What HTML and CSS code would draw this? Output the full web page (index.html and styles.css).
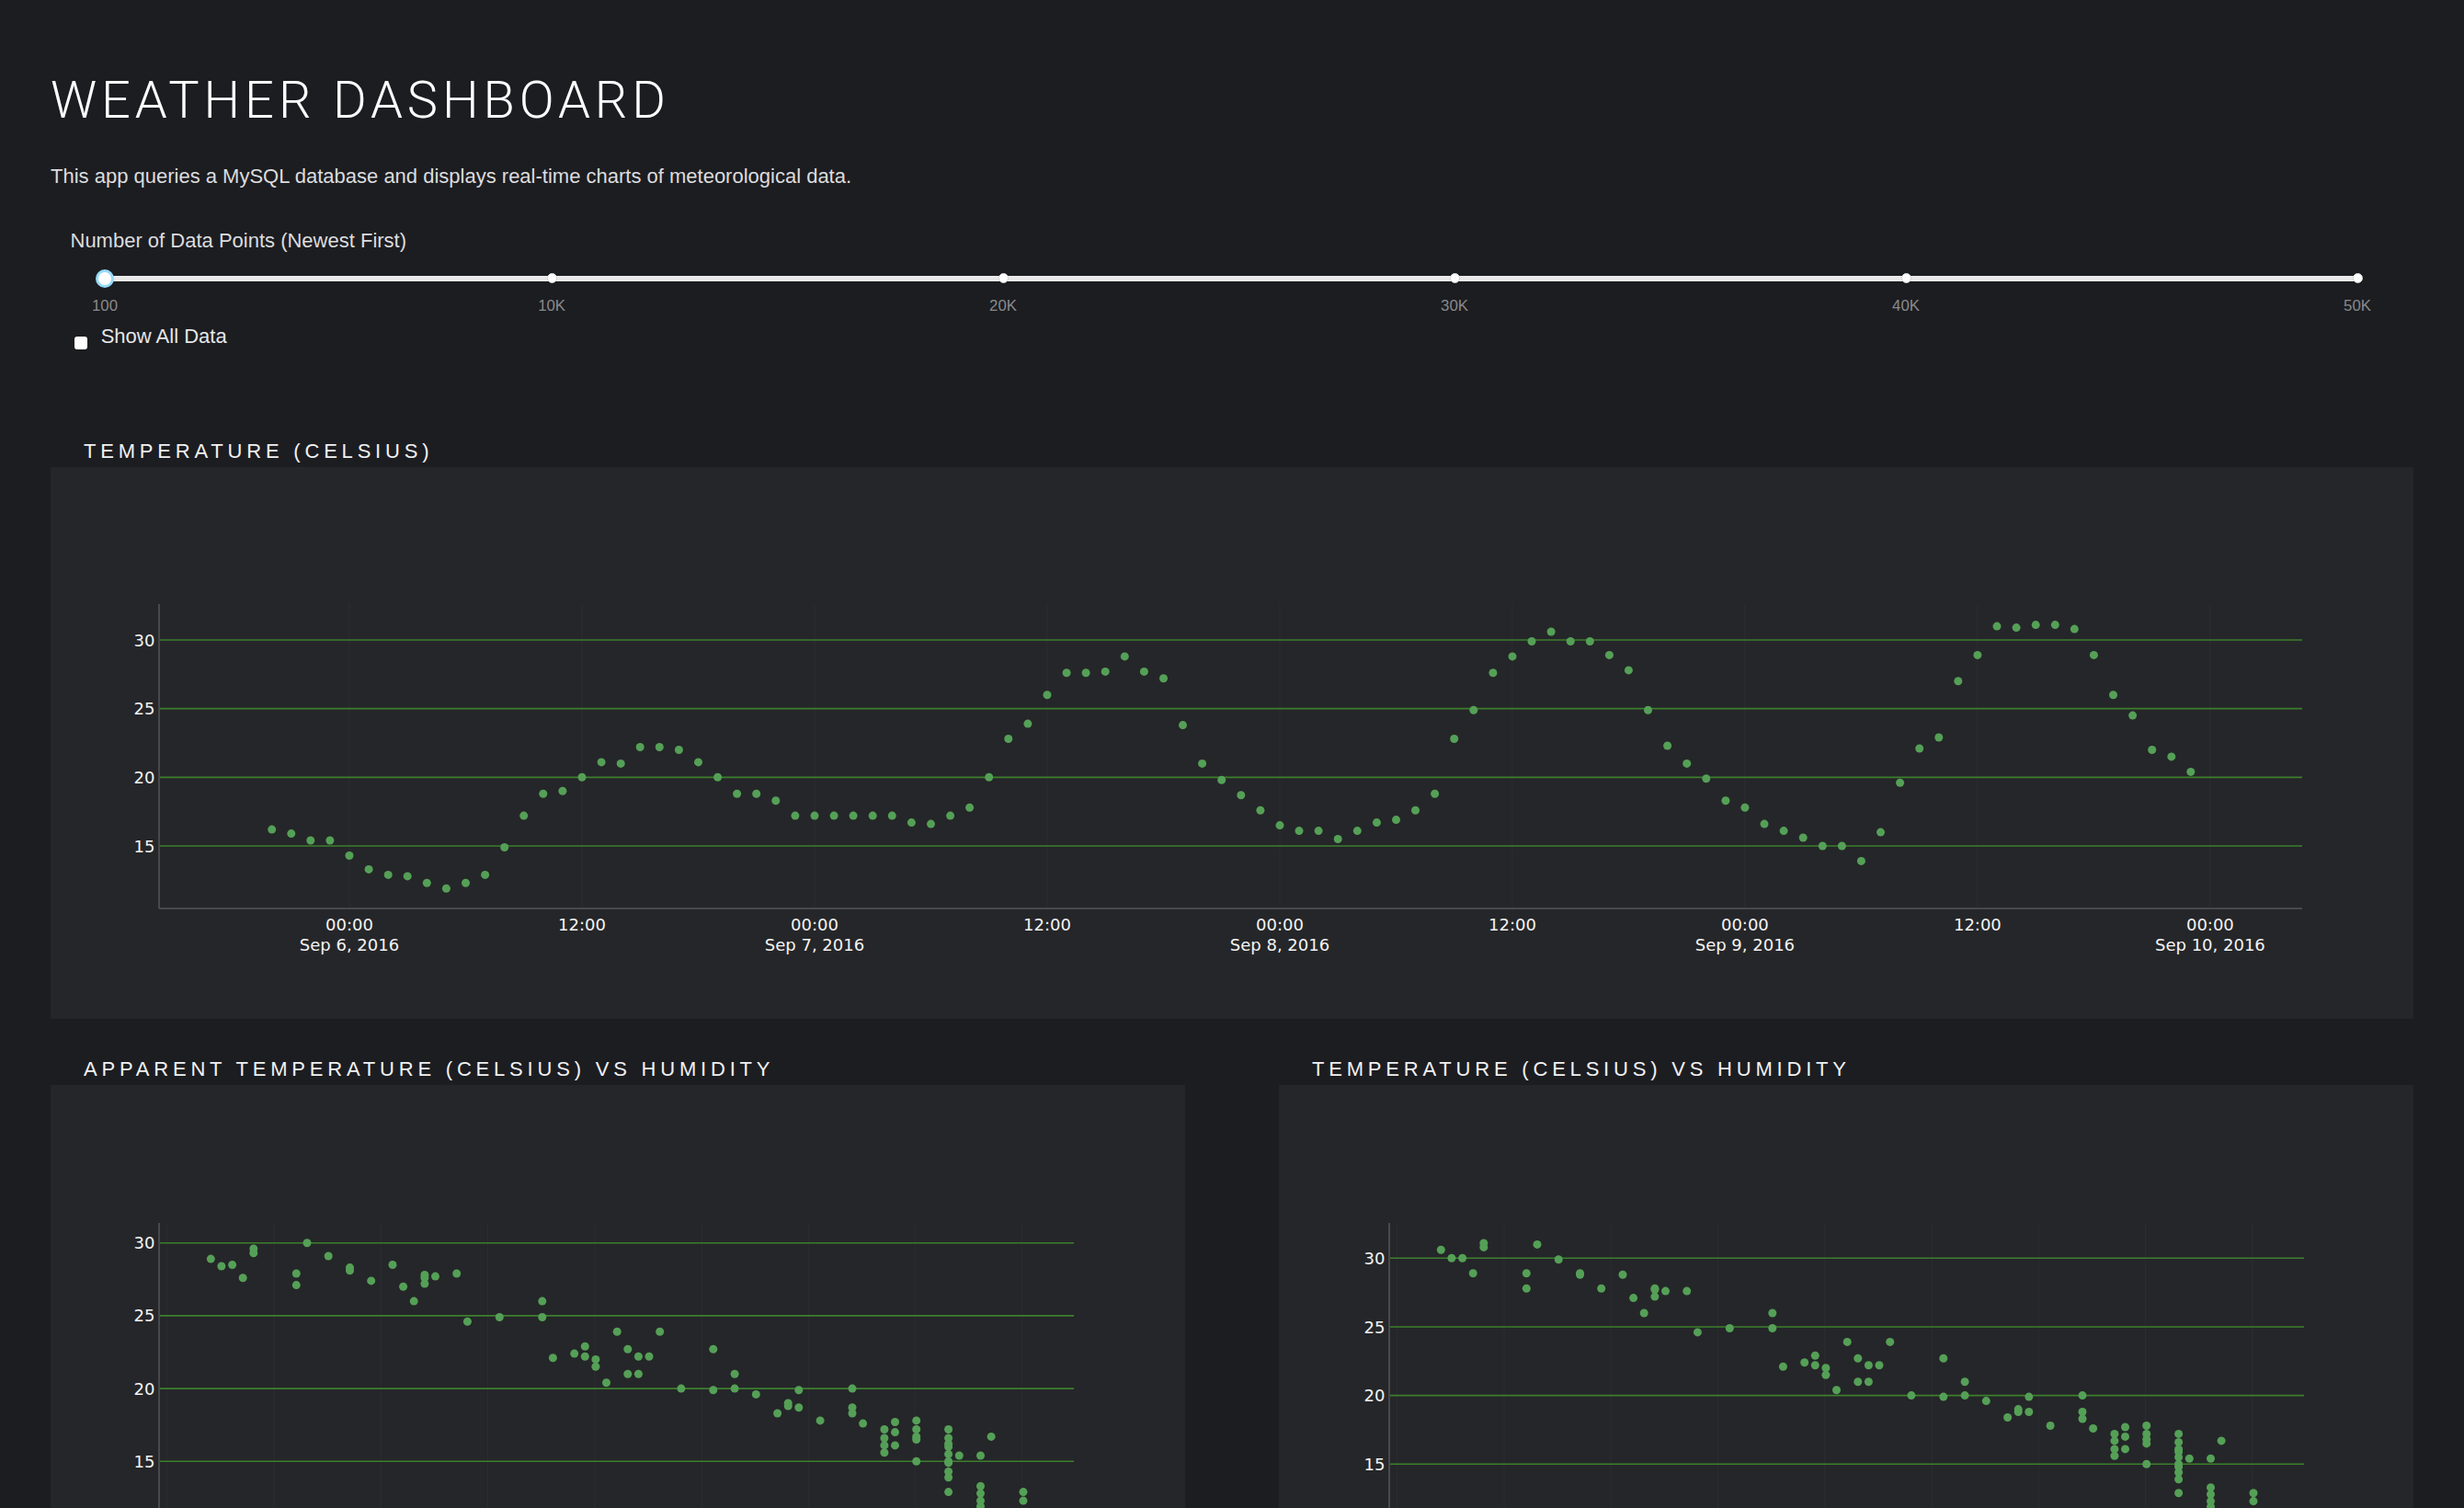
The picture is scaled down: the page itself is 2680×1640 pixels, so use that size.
FILE: index.html
```html
<!DOCTYPE html>
<html lang="en">
<head>
<meta charset="utf-8">
<title>Weather Dashboard</title>
<link rel="stylesheet" href="styles.css">
</head>
<body>
<div class="container">
  <h1 class="app-title">WEATHER DASHBOARD</h1>
  <p class="app-desc">This app queries a MySQL database and displays real-time charts of meteorological data.</p>

  <div class="controls">
    <div class="control-label">Number of Data Points (Newest First)</div>
    <div class="slider">
      <div class="slider-rail">
        <span class="slider-dot" style="left:0%"></span>
        <span class="slider-dot" style="left:19.840%"></span>
        <span class="slider-dot" style="left:39.880%"></span>
        <span class="slider-dot" style="left:59.920%"></span>
        <span class="slider-dot" style="left:79.960%"></span>
        <span class="slider-dot" style="left:100%"></span>
        <span class="slider-handle" style="left:0%"></span>
      </div>
      <div class="slider-marks">
        <span class="slider-mark" style="left:0%">100</span>
        <span class="slider-mark" style="left:19.840%">10K</span>
        <span class="slider-mark" style="left:39.880%">20K</span>
        <span class="slider-mark" style="left:59.920%">30K</span>
        <span class="slider-mark" style="left:79.960%">40K</span>
        <span class="slider-mark" style="left:100%">50K</span>
      </div>
    </div>
    <label class="checkbox"><input type="checkbox">Show All Data</label>
  </div>

  <section class="graph graph-wide">
    <h6 class="graph-title">TEMPERATURE (CELSIUS)</h6>
    <div class="graph-panel"><svg id="chart-temp" class="chart"></svg></div>
  </section>

  <div class="graph-row">
    <section class="graph">
      <h6 class="graph-title">APPARENT TEMPERATURE (CELSIUS) VS HUMIDITY</h6>
      <div class="graph-panel"><svg id="chart-apparent" class="chart"></svg></div>
    </section>
    <section class="graph">
      <h6 class="graph-title">TEMPERATURE (CELSIUS) VS HUMIDITY</h6>
      <div class="graph-panel"><svg id="chart-humidity" class="chart"></svg></div>
    </section>
  </div>
</div>
<script src="script.js"></script>
</body>
</html>
```

FILE: styles.css
```css
* { box-sizing: border-box; }

html, body {
  margin: 0;
  padding: 0;
}

body {
  background: #1c1d21;
  color: #e2e2e4;
  font-family: "Liberation Sans", Arial, Helvetica, sans-serif;
}

.container {
  padding: 81px 55px 0;
}

.app-title {
  margin: 0;
  font-family: Roboto, "Liberation Sans", sans-serif;
  font-weight: 300;
  font-size: 56px;
  line-height: 56px;
  letter-spacing: 4.9px;
  color: #ffffff;
}

.app-desc {
  margin: 39.5px 0 0;
  font-size: 22px;
  line-height: 30px;
  color: #dcdcde;
}

.controls {
  margin-top: 40px;
}

.control-label {
  margin-left: 21.5px;
  font-size: 22px;
  line-height: 30px;
  color: #dcdcde;
}

.slider {
  margin: 23px 61px 0 59px;
}

.slider-rail {
  position: relative;
  height: 6px;
  border-radius: 3px;
  background: #e9e9e9;
}

.slider-dot {
  position: absolute;
  top: 50%;
  width: 11px;
  height: 11px;
  margin: -5.5px 0 0 -5.5px;
  border-radius: 50%;
  background: #ffffff;
  border: 1px solid #d4d4d4;
}

.slider-handle {
  position: absolute;
  top: 50%;
  width: 20px;
  height: 20px;
  margin: -10px 0 0 -10px;
  border-radius: 50%;
  background: #ffffff;
  border: 3px solid #96dbfa;
}

.slider-marks {
  position: relative;
  height: 20px;
  margin-top: 17.5px;
}

.slider-mark {
  position: absolute;
  top: 0;
  transform: translateX(-50%);
  font-size: 16.8px;
  line-height: 20px;
  color: #8a8a8c;
  white-space: nowrap;
}

.checkbox {
  display: flex;
  align-items: flex-start;
  margin: 8px 0 0 25.7px;
  font-size: 22px;
  line-height: 30px;
  color: #e6e6e8;
}

.checkbox input {
  appearance: none;
  -webkit-appearance: none;
  margin: 15px 15px 0 0;
  width: 14px;
  height: 14px;
  border-radius: 3px;
  background: #ffffff;
}

.graph-wide {
  margin-top: 97px;
}

.graph-title {
  margin: 0 0 4px;
  padding-left: 36px;
  font-size: 22px;
  line-height: 26px;
  font-weight: 400;
  letter-spacing: 4.8px;
  color: #f2f2f4;
}

.graph-panel {
  background: #252629;
  height: 600px;
}

.chart {
  display: block;
  width: 100%;
  height: 600px;
}

.graph-row {
  display: grid;
  grid-template-columns: 1fr 1fr;
  column-gap: 102px;
  margin-top: 42px;
}

/* chart parts */
.grid-h {
  stroke: #3c7f2c;
  stroke-width: 1.6;
}

.grid-v {
  stroke: rgba(255, 255, 255, 0.035);
  stroke-width: 1;
}

.axis {
  stroke: #48494c;
  stroke-width: 2;
}

.tick {
  fill: #f4f4f4;
  font-family: "DejaVu Sans", Verdana, sans-serif;
  font-size: 18px;
}

.tick-y { text-anchor: end; }
.tick-x { text-anchor: middle; }

.dot {
  fill: #55a057;
}
```

FILE: script.js
```js
(function () {
  var NS = "http://www.w3.org/2000/svg";

  function add(parent, tag, attrs, text) {
    var e = document.createElementNS(NS, tag);
    for (var k in attrs) e.setAttribute(k, attrs[k]);
    if (text != null) e.textContent = text;
    parent.appendChild(e);
    return e;
  }

  function draw(id, c) {
    var svg = document.getElementById(id);
    if (!svg) return;
    svg.setAttribute("viewBox", "0 0 " + c.w + " " + c.h);
    svg.setAttribute("preserveAspectRatio", "none");

    for (var gx = c.vgrid0; gx < c.right; gx += c.vgridStep) {
      add(svg, "line", { x1: gx, y1: c.top, x2: gx, y2: c.bottom, "class": "grid-v" });
    }

    c.yticks.forEach(function (v) {
      var y = c.y(v);
      add(svg, "line", { x1: c.left, y1: y, x2: c.right, y2: y, "class": "grid-h" });
      add(svg, "text", { x: c.left - 4.5, y: (y + 6.5).toFixed(1), "class": "tick tick-y" }, String(v));
    });

    add(svg, "line", { x1: c.left, y1: c.top, x2: c.left, y2: c.bottom, "class": "axis" });
    add(svg, "line", { x1: c.left, y1: c.bottom, x2: c.right, y2: c.bottom, "class": "axis" });

    (c.xticks || []).forEach(function (t) {
      add(svg, "text", { x: t.x.toFixed(1), y: c.bottom + 24, "class": "tick tick-x" }, t.lines[0]);
      if (t.lines[1]) add(svg, "text", { x: t.x.toFixed(1), y: c.bottom + 46, "class": "tick tick-x" }, t.lines[1]);
    });

    c.points.forEach(function (p) {
      add(svg, "circle", { cx: c.x(p[0]).toFixed(1), cy: c.y(p[1]).toFixed(1), r: 4.5, "class": "dot" });
    });
  }

  /* Hourly temperature, Sep 5 20:00 -> Sep 9 23:00 (100 points) */
  var temps = [
    16.2, 15.9, 15.4, 15.4, 14.3, 13.3, 12.9, 12.8, 12.3, 11.9,
    12.3, 12.9, 14.9, 17.2, 18.8, 19.0, 20.0, 21.1, 21.0, 22.2,
    22.2, 22.0, 21.1, 20.0, 18.8, 18.8, 18.3, 17.2, 17.2, 17.2,
    17.2, 17.2, 17.2, 16.7, 16.6, 17.2, 17.8, 20.0, 22.8, 23.9,
    26.0, 27.6, 27.6, 27.7, 28.8, 27.7, 27.2, 23.8, 21.0, 19.8,
    18.7, 17.6, 16.5, 16.1, 16.1, 15.5, 16.1, 16.7, 16.9, 17.6,
    18.8, 22.8, 24.9, 27.6, 28.8, 29.9, 30.6, 29.9, 29.9, 28.9,
    27.8, 24.9, 22.3, 21.0, 19.9, 18.3, 17.8, 16.6, 16.1, 15.6,
    15.0, 15.0, 13.9, 16.0, 19.6, 22.1, 22.9, 27.0, 28.9, 31.0,
    30.9, 31.1, 31.1, 30.8, 28.9, 26.0, 24.5, 22.0, 21.5, 20.4
  ];

  var dayPx = 505.98, hourPx = dayPx / 24, origin = 325;
  var timePoints = temps.map(function (t, i) { return [i - 4, t]; });
  var days = ["Sep 6, 2016", "Sep 7, 2016", "Sep 8, 2016", "Sep 9, 2016", "Sep 10, 2016"];
  var xticks = [];
  for (var n = 0; n <= 8; n++) {
    xticks.push({
      x: origin + n * dayPx / 2,
      lines: n % 2 === 0 ? ["00:00", days[n / 2]] : ["12:00"]
    });
  }

  draw("chart-temp", {
    w: 2570, h: 600, left: 118, right: 2449, top: 149, bottom: 480,
    x: function (h) { return origin + h * hourPx; },
    y: function (t) { return 412 - (t - 15) * 14.933; },
    yticks: [15, 20, 25, 30],
    vgrid0: origin, vgridStep: dayPx / 2,
    xticks: xticks,
    points: timePoints
  });

  /* [humidity step, apparent temperature] */
  var apparent = [
    [0,28.9],[1,28.4],[2,28.5],[3,27.6],[4,29.6],[4,29.3],[8,27.9],[8,27.1],[9,30.0],[11,29.1],
    [13,28.3],[13,28.1],[15,27.4],[17,28.5],[18,27.0],[19,26.0],[20,27.8],[20,27.6],[20,27.2],[21,27.7],
    [23,27.9],[24,24.6],[27,24.9],[31,26.0],[31,24.9],[32,22.1],[34,22.4],[35,22.9],[35,22.2],[36,22.0],
    [36,21.5],[37,20.4],[38,23.9],[39,22.7],[39,21.0],[40,22.2],[40,21.0],[41,22.2],[42,23.9],[44,20.0],
    [47,22.7],[47,19.9],[49,21.0],[49,20.0],[51,19.6],[53,18.3],[54,19.0],[54,18.8],[55,19.9],[55,18.7],
    [57,17.8],[60,20.0],[60,18.7],[60,18.3],[61,17.6],[63,17.2],[63,16.6],[63,16.1],[63,15.6],[64,17.7],
    [64,17.0],[64,16.1],[66,17.8],[66,17.2],[66,16.7],[66,16.5],[66,15.0],[69,17.2],[69,16.6],[69,16.2],
    [69,16.0],[69,15.5],[69,15.0],[69,14.9],[69,14.3],[69,13.9],[69,12.9],[70,15.4],[72,15.4],[72,13.3],
    [72,12.8],[72,12.3],[72,11.9],[73,16.7],[76,12.9],[76,12.3]
  ];

  /* [humidity step, temperature] */
  var humid = [
    [0,30.6],[1,30.0],[2,30.0],[3,28.9],[4,31.1],[4,30.8],[8,28.9],[8,27.8],[9,31.0],[11,29.9],
    [13,28.9],[13,28.8],[15,27.8],[17,28.8],[18,27.1],[19,26.0],[20,27.8],[20,27.7],[20,27.2],[21,27.6],
    [23,27.6],[24,24.6],[27,24.9],[31,26.0],[31,24.9],[32,22.1],[34,22.4],[35,22.9],[35,22.2],[36,22.0],
    [36,21.5],[37,20.4],[38,23.9],[39,22.7],[39,21.0],[40,22.2],[40,21.0],[41,22.2],[42,23.9],[44,20.0],
    [47,22.7],[47,19.9],[49,21.0],[49,20.0],[51,19.6],[53,18.4],[54,19.0],[54,18.8],[55,19.9],[55,18.8],
    [57,17.8],[60,20.0],[60,18.8],[60,18.3],[61,17.6],[63,17.2],[63,16.7],[63,16.1],[63,15.6],[64,17.7],
    [64,17.0],[64,16.1],[66,17.8],[66,17.2],[66,16.8],[66,16.5],[66,15.0],[69,17.2],[69,16.6],[69,16.1],
    [69,15.9],[69,15.5],[69,15.0],[69,14.8],[69,14.4],[69,13.9],[69,12.9],[70,15.4],[72,15.4],[72,13.3],
    [72,12.8],[72,12.3],[72,11.9],[73,16.7],[76,12.9],[76,12.3]
  ];

  var step = 11.628;

  draw("chart-apparent", {
    w: 1234, h: 600, left: 118, right: 1113, top: 150, bottom: 481,
    x: function (k) { return 174.3 + k * step; },
    y: function (t) { return 171.7 + (30 - t) * 15.84; },
    yticks: [15, 20, 25, 30],
    vgrid0: 126.7, vgridStep: step * 10,
    points: apparent
  });

  draw("chart-humidity", {
    w: 1234, h: 600, left: 120, right: 1115, top: 150, bottom: 481,
    x: function (k) { return 176.3 + k * step; },
    y: function (t) { return 188.3 + (30 - t) * 14.933; },
    yticks: [15, 20, 25, 30],
    vgrid0: 128.7, vgridStep: step * 10,
    points: humid
  });
})();
```
